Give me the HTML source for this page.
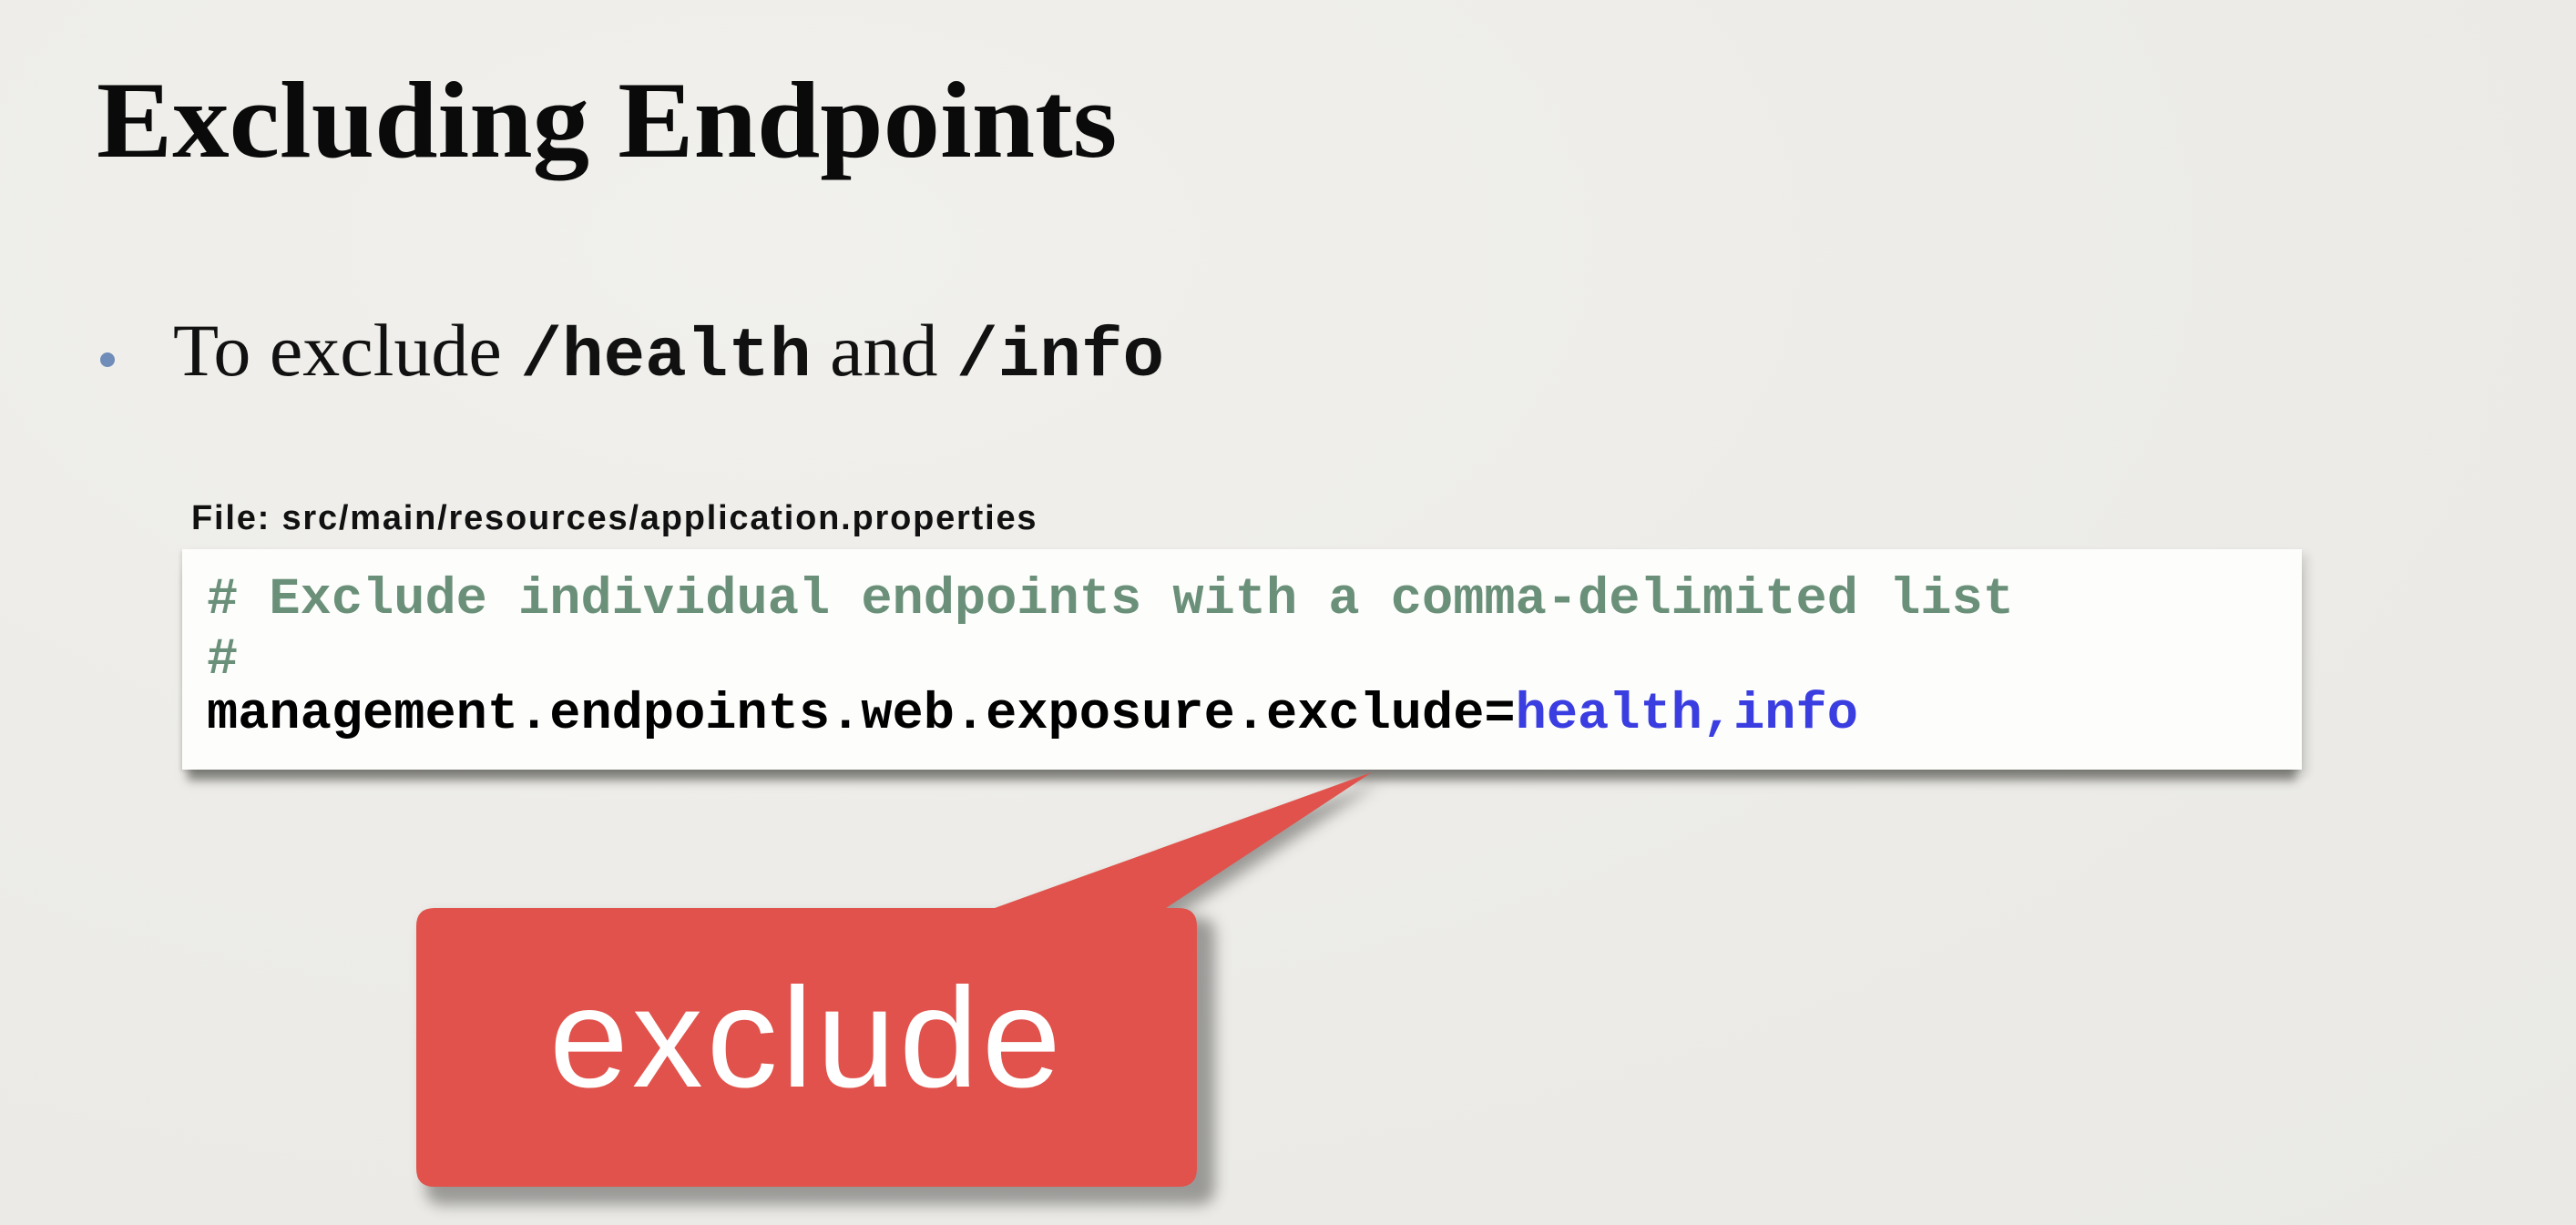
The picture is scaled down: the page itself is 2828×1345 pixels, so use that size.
<!DOCTYPE html>
<html><head><meta charset="utf-8"><style>
html,body{margin:0;padding:0}
body{width:2828px;height:1345px;overflow:hidden;position:relative;background:#edece8;
background-image:radial-gradient(ellipse at 30% 20%,#f1f0ec 0%,#ecebe7 60%,#eae9e5 100%);}
.t{position:absolute;white-space:nowrap}
#title{left:106px;top:72px;font-family:"Liberation Serif",serif;font-weight:bold;font-size:120px;line-height:1;color:#0a0a0a;letter-spacing:0;transform:scaleX(1.04);transform-origin:left top}
#bullet{left:110px;top:387px;width:16px;height:16px;border-radius:50%;background:#6f8db8;position:absolute}
#line{left:190px;top:344px;font-family:"Liberation Serif",serif;font-size:82px;line-height:1;color:#111;letter-spacing:0}
#line code{font-family:"Liberation Mono",monospace;font-weight:bold;font-size:76px;letter-spacing:0}
#file{left:210px;top:548px;font-family:"Liberation Sans",sans-serif;font-weight:bold;font-size:38px;color:#111;letter-spacing:1.8px}
#box{position:absolute;left:200px;top:603px;width:2327px;height:242px;background:#fdfdfc;
box-shadow:0 18px 10px -6px rgba(60,60,55,.55),6px 6px 10px rgba(0,0,0,.12),-2px 2px 4px rgba(0,0,0,.1)}
.c{position:absolute;left:27px;font-family:"Liberation Mono",monospace;font-weight:bold;font-size:57px;line-height:1;white-space:pre}
.g{color:#6b9079}.b{color:#3a3ee0}
#call{position:absolute;left:0;top:0}
#ex{left:603px;top:1062px;font-family:"Liberation Sans",sans-serif;font-size:156px;line-height:1;color:#fff;letter-spacing:4px}
</style></head><body>
<div class="t" id="title">Excluding Endpoints</div>
<div id="bullet"></div>
<div class="t" id="line">To exclude <code>/health</code> and <code>/info</code></div>
<div class="t" id="file">File: src/main/resources/application.properties</div>
<div id="box">
<div class="c g" style="top:28px"># Exclude individual endpoints with a comma-delimited list</div>
<div class="c g" style="top:94px">#</div>
<div class="c" style="top:154px">management.endpoints.web.exposure.exclude=<span class="b">health,info</span></div>
</div>
<svg id="call" width="2828" height="1345">
<defs><filter id="sh" x="-10%" y="-10%" width="130%" height="130%"><feGaussianBlur stdDeviation="8"/></filter></defs>
<path d="M477 1007 H1102 L1516 858 L1290 1007 H1314 Q1334 1007 1334 1027 V1303 Q1334 1323 1314 1323 H487 Q467 1323 467 1303 V1027 Q467 1007 477 1007Z" fill="rgba(0,0,0,.35)" filter="url(#sh)"/>
<path d="M477 997 H1092 L1506 848 L1280 997 H1294 Q1314 997 1314 1017 V1283 Q1314 1303 1294 1303 H477 Q457 1303 457 1283 V1017 Q457 997 477 997Z" fill="#e0524b"/>
</svg>
<div class="t" id="ex">exclude</div>
</body></html>
